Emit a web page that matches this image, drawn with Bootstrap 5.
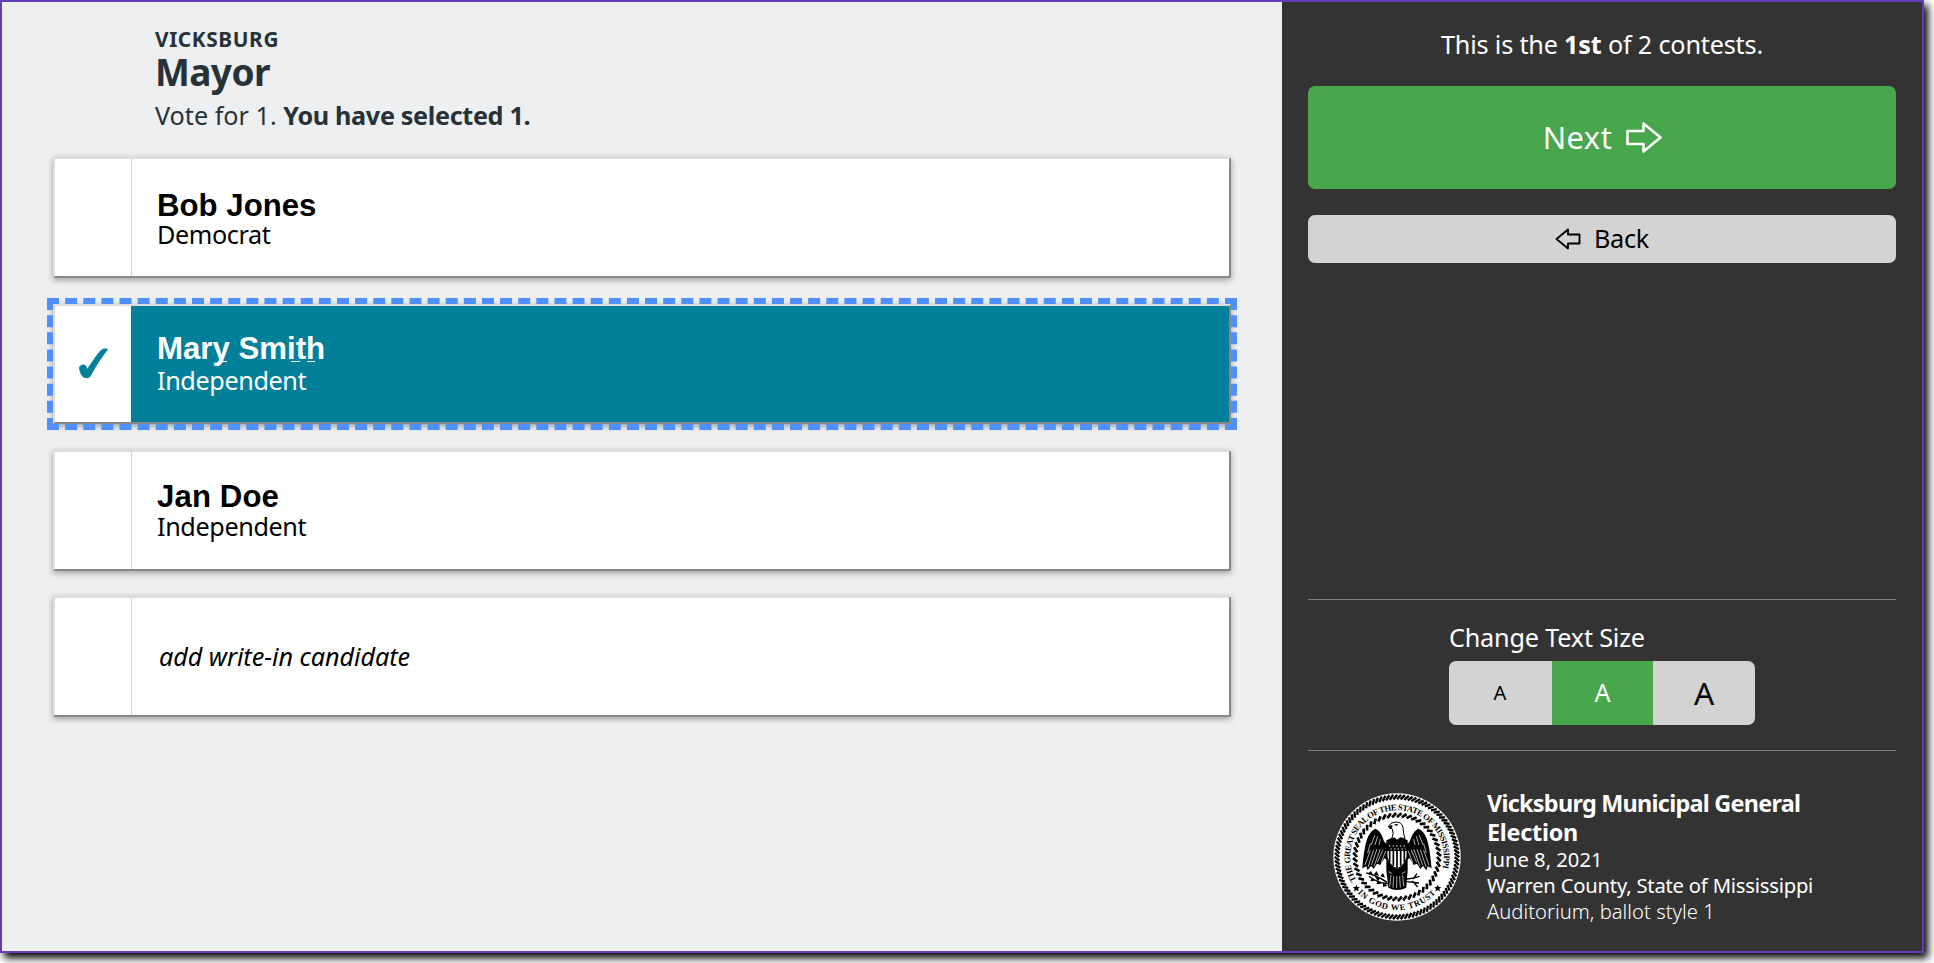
<!DOCTYPE html>
<html lang="en">
<head>
<meta charset="utf-8">
<title>Ballot</title>
<link href="https://cdn.jsdelivr.net/npm/bootstrap@5.3.0/dist/css/bootstrap.min.css" rel="stylesheet">
<script src="https://cdn.jsdelivr.net/npm/bootstrap@5.3.0/dist/js/bootstrap.bundle.min.js"></script>
<style>
body{background:#fff;font-family:"Noto Sans","Open Sans",sans-serif;min-height:963px}
.frame{width:1924px;height:953px;border:2px solid #673ab7;box-shadow:4px 5px 8px #000;background:#edeff0}
.contest{color:#263238;padding:25px 51px 0}
.heading{padding-left:102px;margin-bottom:24px}
.district{font-size:20.8px;line-height:24px;letter-spacing:.62px}
.office{font-size:37px;line-height:42px;letter-spacing:-.6px}
.t25{font-size:25.2px;line-height:36px;letter-spacing:-.18px}
.t25.vote{letter-spacing:0}
.t25 .picked{letter-spacing:-.34px}
.choice{height:121px;background:#fff;color:#000;border:2px solid;border-color:#ddd #888 #888 #ddd;border-radius:2px;box-shadow:0 2px 6px rgba(0,0,0,.35);margin-bottom:25px}
.gap26{margin-bottom:26px}
.tick{width:77px;border-right:1px solid #d3d3d3;background:#fff}
.choice.on{height:120px;background:#028099;color:#fff;outline:6px dashed #4e90ff;border-radius:0}
.choice.on .tick{border:0;width:76px;margin-right:1px}
.who{padding-left:25px}
.nm{font:bold 31.2px/33px "Liberation Sans",Arial,sans-serif}
.on .nm{padding-bottom:3px}
.on .pty{padding-bottom:4px}
.nm.j{padding-bottom:1px;letter-spacing:.1px}
.nm.j + .pty{padding-bottom:4px}
.pty{font-size:25.2px;line-height:24px;letter-spacing:-.38px}
.pty.wi{letter-spacing:-.06px;padding-left:2px;padding-bottom:2px}
.specks{left:61px;bottom:5px}
.side{width:640px;background:#333;color:#fff;padding:24px 26px 0}
.bt{border-radius:7px;border:0}
.bt-next{height:103px;background:#48a74c;color:#fff;font-size:30.8px;margin-top:24px;padding-left:14px;letter-spacing:.5px}
.bt-back{height:48px;background:#d3d3d3;color:#000;font-size:25.2px;margin-top:26px;letter-spacing:-.26px}
.bt-back svg{margin-right:13px}
.sizes{border-top:1px solid #808080;border-bottom:1px solid #808080;padding:22px 0 25px 141px}
.sizes .t25{line-height:30px}
.seg{width:306px;height:64px;margin-top:9px;border-radius:7px;overflow:hidden;background:#d3d3d3;color:#000}
.seg div{width:102px;line-height:63px;text-align:center}
.seg .s1{font-size:20.2px}
.seg .s2{font-size:25.2px;background:#48a74c;color:#fff;width:101px;margin:0 0 0 1px}
.seg .s3{font-size:31.6px}
.info{padding:38px 0 0 25px;height:200px}
.seal{margin-top:4px;margin-right:26px}
.ttl{font-size:23.4px;line-height:29px;letter-spacing:-.73px}
.ttl .el{letter-spacing:-.25px}
.details{margin-top:-1px}
.ln{font-size:20.2px;line-height:26px}
.county{letter-spacing:-.2px}
.precinct{letter-spacing:.02px}
</style>
</head>
<body>
<div class="frame d-flex">
  <main class="contest flex-grow-1">
    <header class="heading">
      <div class="district fw-bold">VICKSBURG</div>
      <div class="office fw-bold">Mayor</div>
      <div class="t25 vote mt-1">Vote for 1. <b class="picked">You have selected 1.</b></div>
    </header>
    <div class="choice gap26 d-flex"><div class="tick"></div><div class="who align-self-center"><div class="nm">Bob Jones</div><div class="pty">Democrat</div></div></div>
    <div class="choice on gap26 d-flex">
      <div class="tick d-flex">
        <svg class="m-auto" width="32" height="34" viewBox="0 0 32 34"><path fill="#028099" stroke="#028099" stroke-width="1" stroke-linejoin="round" d="M3 23C2 20 3 18.600 5.500 18c3.500-.4 4 2 4.400 5C15 16 20 7.500 24 3.500c2-1.700 5-2 6.500-1.200C25 9.500 18 19.500 13 29.500c-.9 1.500-5.500 1.500-6.500.5-2-2-3-4-3.500-7z"/></svg>
      </div>
      <div class="who align-self-center"><div class="nm position-relative">Mary Smith<svg class="specks position-absolute" width="110" height="3" viewBox="0 0 110 3" fill="none" stroke="#fff"><path d="M3 1.500h6M73 1.500h9M89 1.500h8"/></svg></div><div class="pty">Independent</div></div>
    </div>
    <div class="choice d-flex"><div class="tick"></div><div class="who align-self-center"><div class="nm j">Jan Doe</div><div class="pty">Independent</div></div></div>
    <div class="choice d-flex"><div class="tick"></div><div class="who align-self-center"><div class="pty wi fst-italic">add write-in candidate</div></div></div>
  </main>
  <aside class="side d-flex flex-column">
    <div class="t25 text-center">This is the <b>1st</b> of 2 contests.</div>
    <button class="btn bt bt-next d-flex align-items-center justify-content-center">Next
      <svg class="ms-2 ps-1" width="43" height="33" viewBox="-2 0 39 32" fill="none" stroke="#fff" stroke-width="2.600" stroke-linejoin="round"><path d="M1.500 9.500H17.500V2L34.500 16L17.500 30V22.500H1.500Z"/></svg>
    </button>
    <button class="btn bt bt-back d-flex align-items-center justify-content-center">
      <svg width="26" height="22" viewBox="0 0 26 22" fill="none" stroke="#000" stroke-width="1.900" stroke-linejoin="round"><path d="M24.500 6.500H13V1.500L1.500 11L13 20.500V15.500H24.500Z"/></svg>Back
    </button>
    <section class="mt-auto sizes">
      <div class="t25">Change Text Size</div>
      <div class="seg d-flex"><div class="s1">A</div><div class="s2">A</div><div class="s3">A</div></div>
    </section>
    <footer class="info d-flex align-items-start">
      <svg class="seal flex-shrink-0" width="128" height="128" viewBox="-192 -192 384 384">
        <defs>
          <path id="arcTop" d="M-122 70A140.600 140.600 0 1 1 122 70"/>
          <path id="arcLow" d="M-121 104A159.500 159.500 0 0 0 121 104"/>
        </defs>
        <circle r="191" fill="#fff"/>
        <g id="ropes" stroke="#000"></g>
        <g font-family="'Liberation Serif',serif" font-weight="bold" font-size="25.500">
          <text><textPath href="#arcTop" textLength="548" lengthAdjust="spacing">THE GREAT SEAL OF THE STATE OF MISSISSIPPI</textPath></text>
          <text><textPath href="#arcLow" startOffset="4" textLength="264" lengthAdjust="spacing">IN GOD WE TRUST</textPath></text>
        </g>
        <path d="M-122 83l3 7 8 .5-6 5 2 8-7-4.500-7 4.500 2-8-6-5 8-.5z"/>
        <path d="M122 83l3 7 8 .5-6 5 2 8-7-4.500-7 4.500 2-8-6-5 8-.5z"/>
        <g id="wing">
          <path d="M-65-85C-92-72-98-30-104 34L-92 28-88 40-78 26-70 36-60 20-50 24-38 4-30 8V-40C-46-46-38-72-65-85Z"/>
          <path stroke="#fff" stroke-width="2" fill="none" d="M-96 24L-80-20M-87 30L-70-22M-77 24L-60-24M-69 28L-50-24M-59 16L-42-22M-48 18L-34-18M-78-36L-66-66M-66-36L-58-62M-54-36L-50-54M-88-12L-80-40"/>
        </g>
        <use href="#wing" transform="scale(-1 1)"/>
        <path d="M-32-50L-14-58H16L32-50V40L28 92Q0 106-26 92L-32 40Z"/>
        <path stroke="#fff" stroke-width="2" fill="none" d="M-18 54L-22 88M-10 58L-12 92M-1 58V94M8 58L10 92M17 54L20 88M-26 44L-14 50M26 44L14 50"/>
        <path fill="#fff" stroke="#000" stroke-width="3" d="M-16-54Q-8-72-14-84L-26-91Q-20-104-6-105Q14-106 18-90Q19-70 24-54L10-58 0-50-8-58Z"/>
        <path d="M-26-92L-14-96-14-89-22-84ZM-7-99l10 1-2 4-8-1z"/>
        <path fill="#fff" stroke="#000" stroke-width="3" d="M-30-40H30V0Q24 24 0 36Q-24 24-30 0Z"/>
        <path d="M-30-40H30V-18H-30Z"/>
        <path stroke="#fff" stroke-width="3" stroke-dasharray="4 7" d="M-24-33H26M-20-24H26"/>
        <path stroke="#000" stroke-width="5" d="M-22-18V16M-11-18V26M0-18V34M11-18V26M22-18V16"/>
        <path fill="none" stroke="#000" stroke-width="4" d="M-92 48Q-60 56-30 76M-84 58Q-56 80-26 80M30 66Q48 64 68 58M30 74L66 78M46 72L62 90M48 66L60 50"/>
        <path d="M-88 50l10-8 6 12zM-70 54l8-12 8 14zM-76 62l-4 10 14 0zM-58 70l-4 12 16-2zM-50 58l8-10 6 14zM-42 76l0 14 14-4zM-66 60l14 2-4 12z"/>
      </svg>
      <div>
        <div class="ttl fw-bold">Vicksburg Municipal General<br><span class="el">Election</span></div>
        <div class="details">
          <div class="ln">June 8, 2021</div>
          <div class="ln county">Warren County, State of Mississippi</div>
          <div class="ln precinct fw-light">Auditorium, ballot style 1</div>
        </div>
      </div>
    </footer>
  </aside>
</div>
<script>
// slanted rope strands of the seal's two rings
function ring(inner, outer, count, twist, width) {
  let d = '';
  for (let i = 0; i < count; i++) {
    const a = i * 2 * Math.PI / count, b = a + twist;
    d += `M${inner * Math.cos(a)} ${inner * Math.sin(a)}L${outer * Math.cos(b)} ${outer * Math.sin(b)}`;
  }
  return `<path d="${d}" stroke-width="${width}"/>`;
}
document.getElementById('ropes').innerHTML = ring(173, 187, 100, .065, 7) + ring(120, 132, 52, .1, 8);
</script>
</body>
</html>
